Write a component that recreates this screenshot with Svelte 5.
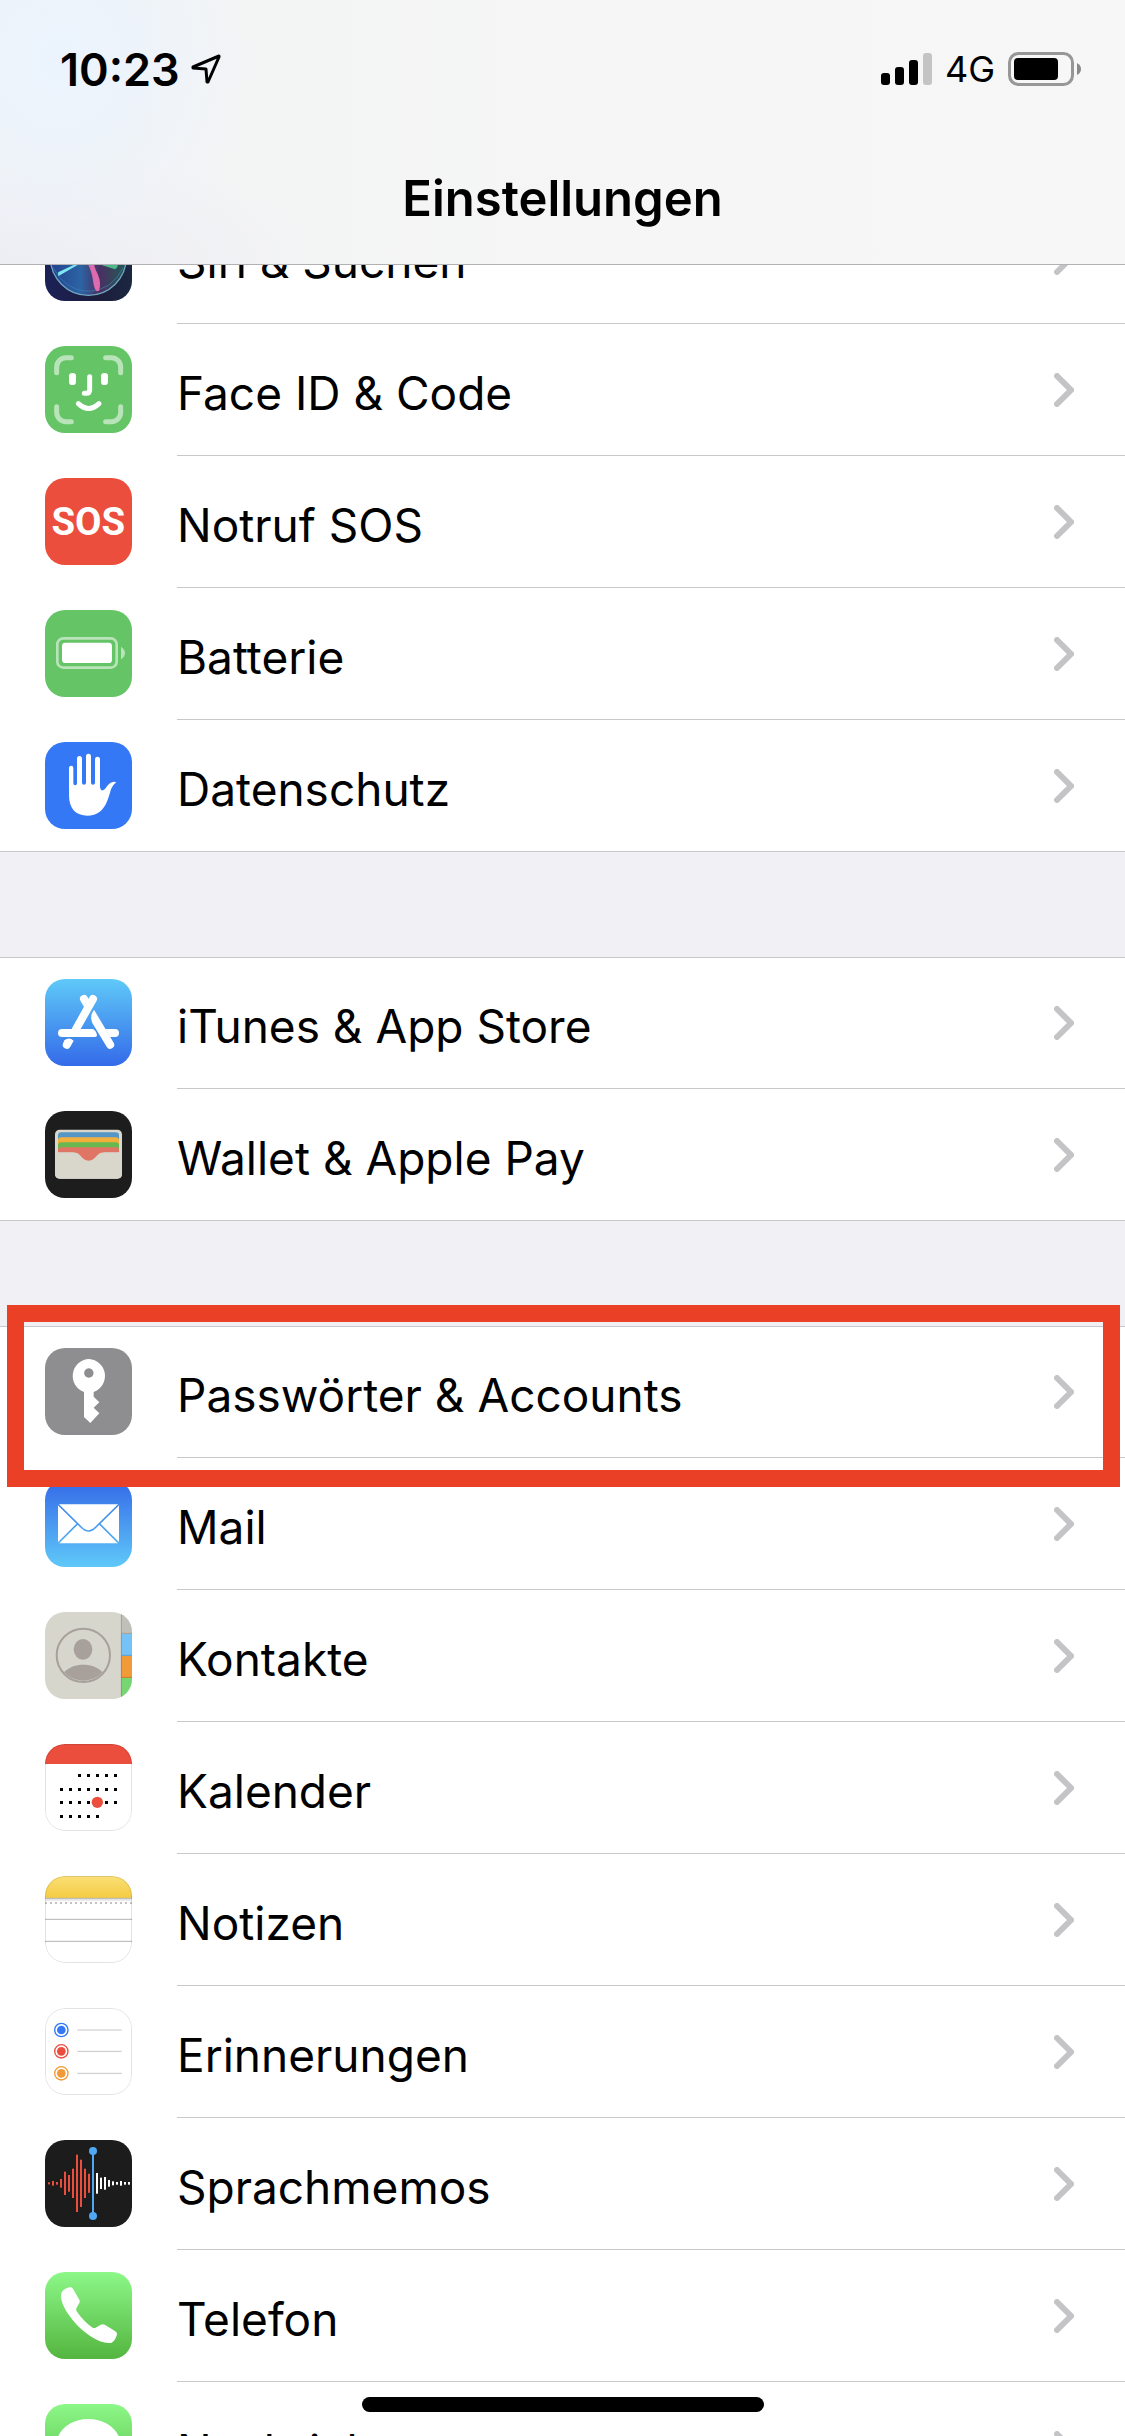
<script lang="ts">
interface Item {
  icon: string;
  label: string;
  marked?: boolean;
}

const groups: Item[][] = [
  [
    { icon: 'siri', label: 'Siri & Suchen' },
    { icon: 'faceid', label: 'Face ID & Code' },
    { icon: 'sos', label: 'Notruf SOS' },
    { icon: 'battery', label: 'Batterie' },
    { icon: 'privacy', label: 'Datenschutz' }
  ],
  [
    { icon: 'appstore', label: 'iTunes & App Store' },
    { icon: 'wallet', label: 'Wallet & Apple Pay' }
  ],
  [
    { icon: 'key', label: 'Passwörter & Accounts', marked: true },
    { icon: 'mail', label: 'Mail' },
    { icon: 'contacts', label: 'Kontakte' },
    { icon: 'calendar', label: 'Kalender' },
    { icon: 'notes', label: 'Notizen' },
    { icon: 'reminders', label: 'Erinnerungen' },
    { icon: 'memos', label: 'Sprachmemos' },
    { icon: 'phone', label: 'Telefon' },
    { icon: 'messages', label: 'Nachrichten' }
  ]
];

// first and last weekday column per calendar row
const weeks = [[2, 6], [0, 6], [0, 6], [0, 4]];
const days = weeks.flatMap(([from, to], row) =>
  Array.from({ length: to - from + 1 }, (_, i) => ({ x: 49 + (from + i) * 27, y: [94, 136, 175, 217][row] }))
);

const reminders = [
  { y: 66, color: '#3478f6' },
  { y: 130, color: '#eb4e3d' },
  { y: 196, color: '#f19a37' }
];

const recorded = [6, 14, 8, 26, 70, 50, 88, 172, 142, 88, 57];
const upcoming = [62, 34, 38, 20, 12, 8, 14, 8, 8];

// white icons get a thin outline
const outlined = ['calendar', 'notes', 'reminders'];
</script>

{#snippet appIcon(name: string)}
  <svg class="icon {name}" viewBox="0 0 261 261" aria-hidden="true">
    {#if name === 'siri'}
      <defs>
        <linearGradient id="siri-bg" x1="0" y1="0" x2="1" y2="0"><stop offset="0" stop-color="#1b2257" /><stop offset=".6" stop-color="#1d1c3c" /><stop offset="1" stop-color="#1b2740" /></linearGradient>
        <linearGradient id="siri-orb" x1="0" y1="0" x2="1" y2="0"><stop offset="0" stop-color="#23418f" /><stop offset=".4" stop-color="#2c64a4" /><stop offset=".65" stop-color="#4a2f62" /><stop offset="1" stop-color="#1f5c55" /></linearGradient>
      </defs>
      <rect width="261" height="261" fill="url(#siri-bg)" />
      <circle cx="130" cy="130" r="114" fill="url(#siri-orb)" stroke="#6fa6c0" stroke-width="4" />
      <path d="M24 160Q60 230 130 232Q200 230 234 162" fill="none" stroke="#3b7fb2" stroke-width="3" opacity=".7" />
      <path d="M42 182L112 142L130 128L98 150L42 176Z" fill="#7ee6ee" stroke="#7ee6ee" stroke-width="5" />
      <path d="M118 130Q142 170 145 206Q150 238 162 230Q170 208 158 180Q146 160 144 130Z" fill="#dc6cae" />
      <path d="M130 124L216 150Q222 158 210 166L160 150Z" fill="#4fb98a" />
      <path d="M130 130L100 30L130 60L166 36Z" fill="#e9f5ff" />
    {:else if name === 'faceid'}
      <rect width="261" height="261" fill="#65c466" />
      <g fill="none" stroke="#fff" stroke-width="15" stroke-linecap="round">
        <path opacity=".55" d="M35 80V63a28 28 0 0 1 28-28H79M182 35H199a28 28 0 0 1 28 28V80M227 182V199a28 28 0 0 1-28 28H182M79 227H63a28 28 0 0 1-28-28V182" />
        <path d="M134 92V131q0 11-11 11H118" />
        <path d="M100 173Q131 202 162 173" />
      </g>
      <rect x="72" y="81" width="21" height="36" rx="10" fill="#fff" />
      <rect x="168" y="81" width="21" height="36" rx="10" fill="#fff" />
    {:else if name === 'sos'}
      <rect width="261" height="261" fill="#eb4e3d" />
      <text x="130" y="172" text-anchor="middle">SOS</text>
    {:else if name === 'battery'}
      <rect width="261" height="261" fill="#65c466" />
      <rect x="37" y="85" width="178" height="88" rx="18" fill="none" stroke="#fff" stroke-width="8" opacity=".55" />
      <rect x="51" y="98" width="150" height="61" rx="10" fill="#fff" />
      <path d="M228 110Q240 118 240 129T228 148Z" fill="#fff" opacity=".55" />
    {:else if name === 'privacy'}
      <rect width="261" height="261" fill="#3478f6" />
      <path fill="#fff" d="M72 78a6.500 7 0 0 1 13 0V124q0 6 5.500 6t5.500-6V50a7.500 8 0 0 1 15 0V122q0 6 6 6t6-6V43a7.500 8 0 0 1 15 0V122q0 6 6 6t6-6V52a7.500 8 0 0 1 15 0V135q2 12 9 10Q181 142 186 133Q194 119 210 119Q214 120 212 123Q203 128 197 145C187 180 176 221 128 221C92 221 72 200 72 160Z" />
    {:else if name === 'appstore'}
      <defs>
        <linearGradient id="store-bg" x1="0" y1="0" x2="0" y2="1"><stop offset="0" stop-color="#5fc9f8" /><stop offset="1" stop-color="#346ae9" /></linearGradient>
      </defs>
      <rect width="261" height="261" fill="url(#store-bg)" />
      <g stroke="#fff" stroke-width="24" stroke-linecap="round">
        <path d="M144 60L92 152" />
        <path d="M117 60L128 79" />
      </g>
      <g fill="#fff">
        <path d="M51 150H144Q155 156 156 170Q154 174 148 174H51a12 12 0 0 1 0-24Z" />
        <path d="M58 184Q72 172 86 185L76 203a12 12 0 0 1-21-12Z" />
        <path d="M147 92Q133 110 142 132L185 203a12 12 0 0 0 21-12Z" />
        <path d="M181 150H210a12 12 0 0 1 0 24H195Z" />
      </g>
    {:else if name === 'wallet'}
      <rect width="261" height="261" fill="#1d1d1d" />
      <rect x="30" y="56" width="201" height="147" rx="14" fill="#d9d6cc" />
      <rect x="39" y="64" width="183" height="40" rx="10" fill="#5497c6" />
      <rect x="39" y="79" width="183" height="40" rx="10" fill="#f3af3d" />
      <rect x="39" y="94" width="183" height="30" rx="10" fill="#68b84f" />
      <path d="M39 125V119q0-10 10-10H212q10 0 10 10V125Z" fill="#e17565" />
      <path d="M30 124H84C110 124 108 149 131 149S152 124 178 124H231V189q0 14-14 14H44q-14 0-14-14Z" fill="#d9d6cc" />
      <path d="M84 123C110 124 108 149 131 149S152 124 178 123Z" fill="#e17565" />
    {:else if name === 'key'}
      <rect width="261" height="261" fill="#8e8e90" />
      <path fill="#fff" fill-rule="evenodd" d="M132 33a51 51 0 0 1 14 99V146L163 163L146 179L163 196L136 225L117 207V132a51 51 0 0 1 15-99ZM131 61a14 14 0 1 0 1 0Z" />
    {:else if name === 'mail'}
      <defs>
        <linearGradient id="mail-bg" x1="0" y1="0" x2="0" y2="261" gradientUnits="userSpaceOnUse"><stop offset="0" stop-color="#3469e9" /><stop offset="1" stop-color="#5fc9f8" /></linearGradient>
      </defs>
      <rect width="261" height="261" fill="url(#mail-bg)" />
      <rect x="39" y="73" width="183" height="117" rx="3" fill="#fff" />
      <path d="M38 72L108 141Q131 165 153 141L223 72M38 191L97 132M223 191L164 132" fill="none" stroke="url(#mail-bg)" stroke-width="5" />
    {:else if name === 'contacts'}
      <rect width="261" height="261" fill="#d6d6cd" />
      <rect x="228" width="33" height="66" fill="#c1c0b9" />
      <rect x="228" y="66" width="33" height="66" fill="#76c3f6" />
      <rect x="228" y="132" width="33" height="66" fill="#f19a37" />
      <rect x="228" y="198" width="33" height="63" fill="#77d672" />
      <path d="M228 64H261M228 130H261M228 196H261M229 0V261" stroke="#000" stroke-width="3" opacity=".18" />
      <circle cx="115" cy="130" r="80" fill="none" stroke="#a8a19b" stroke-width="6" />
      <ellipse cx="114" cy="112" rx="28" ry="31" fill="#a8a19b" />
      <path d="M57 181C72 165 92 158 115 158S158 165 173 181A80 80 0 0 1 57 181Z" fill="#a8a19b" />
    {:else if name === 'calendar'}
      <rect width="261" height="261" fill="#fff" />
      <rect width="261" height="60" fill="#eb4e3d" />
      {#each days as day}
        <rect x={day.x - 4} y={day.y - 4} width="9" height="9" />
      {/each}
      <circle cx="157" cy="175" r="17" fill="#eb4e3d" />
    {:else if name === 'notes'}
      <defs>
        <linearGradient id="notes-top" x1="0" y1="0" x2="0" y2="1"><stop offset="0" stop-color="#fae077" /><stop offset="1" stop-color="#f5cb42" /></linearGradient>
      </defs>
      <rect width="261" height="261" fill="#fff" />
      <rect width="261" height="66" fill="url(#notes-top)" />
      <path d="M0 71H261" stroke="#e4e4e4" stroke-width="6" />
      <path d="M0 67H261M0 130H261M0 196H261" stroke="#b4b4b4" stroke-width="3" />
      <path d="M0 81H261" stroke="#c2c2c2" stroke-width="6" stroke-dasharray="6 9" />
    {:else if name === 'reminders'}
      <rect width="261" height="261" fill="#fff" />
      {#each reminders as dot}
        <circle cx="49" cy={dot.y} r="20" fill="none" stroke={dot.color} stroke-width="4" />
        <circle cx="49" cy={dot.y} r="13" fill={dot.color} />
        <path d="M97 {dot.y}H230" stroke="#c6c6c6" stroke-width="3" />
      {/each}
    {:else if name === 'memos'}
      <rect width="261" height="261" fill="#1c1c1c" />
      {#each recorded as h, i}
        <rect x={9 + i * 12} y={130 - h / 2} width="6" height={h} fill="#eb4e3d" />
      {/each}
      {#each upcoming as h, i}
        <rect x={153 + i * 12} y={130 - h / 2} width="6" height={h} fill="#fff" />
      {/each}
      <rect x="141" y="33" width="6" height="195" fill="#4fa8f4" />
      <circle cx="144" cy="33" r="12" fill="#4fa8f4" />
      <circle cx="144" cy="228" r="12" fill="#4fa8f4" />
    {:else}
      <defs>
        <linearGradient id="{name}-bg" x1="0" y1="0" x2="0" y2="1"><stop offset="0" stop-color="#8cf888" /><stop offset="1" stop-color="#54b53f" /></linearGradient>
      </defs>
      <rect width="261" height="261" fill="url(#{name}-bg)" />
      {#if name === 'phone'}
        <path fill="#fff" d="M50 61Q59 48 76 45Q81 45 84 50L103 83Q106 88 103 93L94 109Q92 114 96 119Q117 149 143 167Q148 169 152 167L167 158Q173 155 179 158L210 177Q217 181 216 187Q212 205 200 212C168 219 117 186 83 144C54 108 43 80 50 61Z" />
      {:else}
        <path fill="#fff" d="M130 45C184 45 227 80 227 123S184 201 130 201Q112 201 97 196Q80 211 56 212Q68 200 70 184Q34 162 34 123C34 80 76 45 130 45Z" />
      {/if}
    {/if}
    {#if outlined.includes(name)}
      <rect x="1.500" y="1.500" width="258" height="258" rx="59" fill="none" stroke="#000" stroke-width="3" opacity=".11" />
    {/if}
  </svg>
{/snippet}

<div class="screen">
  <header>
    <div class="status">
      <div class="clock">
        <time>10:23</time>
        <svg width="32" height="32" viewBox="0 0 32 32" aria-hidden="true">
          <path d="M29 3L3 14V15L16 16L17 29H18L29 4Z" fill="none" stroke="#000" stroke-width="3" stroke-linejoin="round" />
        </svg>
      </div>
      <div class="signal">
        <svg width="51" height="32" viewBox="0 0 51 32" aria-hidden="true">
          <rect y="20" width="9" height="12" rx="3" />
          <rect x="14" y="14" width="9" height="18" rx="3" />
          <rect x="28" y="7" width="9" height="25" rx="3" />
          <rect x="42" width="9" height="32" rx="3" fill="#c4c4c4" />
        </svg>
        <span>4G</span>
        <svg width="74" height="34" viewBox="0 0 74 34" aria-hidden="true">
          <rect x="1.500" y="1.500" width="63" height="31" rx="9" fill="none" stroke="#979797" stroke-width="3" />
          <rect x="6" y="6" width="44" height="22" rx="4" />
          <path d="M69 11Q73 13 73 17T69 23Z" fill="#8a8a8a" />
        </svg>
      </div>
    </div>
    <h1>Einstellungen</h1>
  </header>

  <main>
    {#each groups as group}
      <ul>
        {#each group as item}
          <li class:marked={item.marked}>
            <a href="#{item.icon}">
              {@render appIcon(item.icon)}
              <span class="body">
                <span class="label">{item.label}</span>
                <svg width="20" height="34" viewBox="0 0 20 34" aria-hidden="true">
                  <path d="M3 3L17 17L3 31" fill="none" stroke="#c4c4c6" stroke-width="6" stroke-linecap="round" />
                </svg>
              </span>
            </a>
          </li>
        {/each}
      </ul>
    {/each}
  </main>

  <div class="home"></div>
</div>

<style>
:global(body) {
  margin: 0;
  background: #f0f0f5;
}
.screen {
  position: relative;
  display: flex;
  flex-direction: column;
  height: 100vh;
  overflow: hidden;
  background: #f0f0f5;
  color: #000;
  font-family: Inter, 'Liberation Sans', sans-serif;
}
header {
  position: relative;
  z-index: 2;
  flex: none;
  border-bottom: 1px solid #b2b2b4;
  background:
    radial-gradient(ellipse 200px 220px at 60px 60px, #ebf4fe, transparent),
    radial-gradient(ellipse 320px 120px at 0 264px, #ededf3, transparent),
    linear-gradient(90deg, #f2f3f4, #f6f6f6 60%, #f7f7f7);
}
.status {
  display: flex;
  align-items: center;
  justify-content: space-between;
  height: 138px;
  padding: 0 43px 0 60px;
}
.clock,
.signal {
  display: flex;
  align-items: center;
}
.clock {
  gap: 10px;
  font-size: 45px;
  font-weight: 600;
}
.signal {
  gap: 13px;
  font-size: 36px;
}
h1 {
  margin: 0;
  height: 126px;
  font-size: 49px;
  font-weight: 600;
  line-height: 122px;
  text-align: center;
}
/* scrolled a little, so the first row runs under the header */
main {
  flex: 1;
  min-height: 0;
  margin-top: -73px;
}
ul {
  margin: 0 0 105px;
  padding: 0;
  list-style: none;
  background: #fff;
  box-shadow: inset 0 1px #c8c7cc, inset 0 -1px #c8c7cc;
}
li {
  position: relative;
}
a {
  display: flex;
  gap: 45px;
  padding-left: 45px;
  color: inherit;
  text-decoration: none;
}
.icon {
  flex: none;
  width: 87px;
  height: 87px;
  margin: 22px 0 23px;
  border-radius: 20px;
}
.sos text {
  fill: #fff;
  font-family: Roboto, sans-serif;
  font-size: 115px;
  font-weight: 700;
}
.body {
  flex: 1;
  display: flex;
  align-items: center;
  justify-content: space-between;
  padding-right: 51px;
  border-bottom: 1px solid #c8c7cc;
}
li:last-child .body {
  border-color: transparent;
}
.label {
  padding-top: 6px;
  font-size: 46px;
  line-height: 60px;
}
.marked::after {
  content: '';
  position: absolute;
  z-index: 1;
  inset: -21px 5px -29px 7px;
  border: 17px solid #ea4025;
}
.home {
  position: absolute;
  z-index: 2;
  bottom: 24px;
  left: 50%;
  width: 402px;
  height: 15px;
  margin-left: -201px;
  border-radius: 8px;
  background: #000;
}
</style>
